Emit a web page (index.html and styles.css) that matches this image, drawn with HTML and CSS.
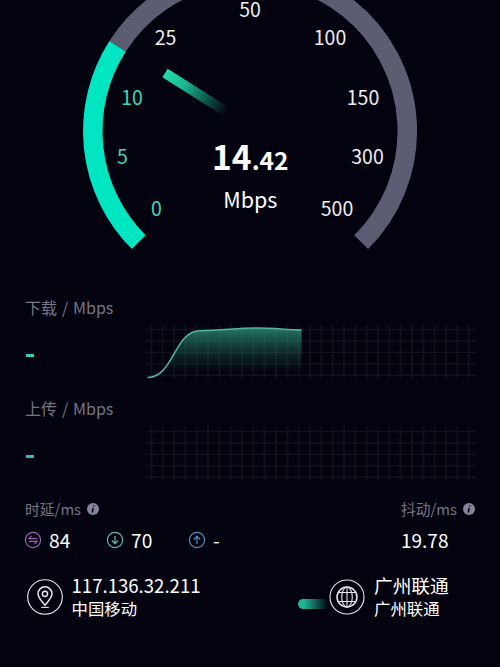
FILE: index.html
```html
<!DOCTYPE html>
<html lang="zh-CN">
<head>
    <meta charset="UTF-8">
    <meta name="viewport" content="width=device-width, initial-scale=1.0">
    <title>Speed Test</title>
    <link rel="stylesheet" href="styles.css">
</head>
<body>
    <!-- Gauge -->
    <svg class="gauge" viewBox="0 0 500 290">
        <defs>
            <linearGradient id="needle" x1="0" x2="1" y1="0" y2="0">
                <stop offset="0" stop-color="#1fdcae"/>
                <stop offset="0.3" stop-color="#1bb893"/>
                <stop offset="1" stop-color="#1bb893" stop-opacity="0"/>
            </linearGradient>
        </defs>
        <path class="track" d="M117.6 46.2A157.25 157.25 0 1 1 361.2 242.2"/>
        <path class="progress" d="M138.8 242.2A157.25 157.25 0 0 1 117.6 46.2"/>
        <rect x="0" y="-5" width="73" height="10" fill="url(#needle)" transform="translate(165 73) rotate(32.2)"/>
        <g class="ticks">
            <text class="on" x="156.5" y="216.4">0</text>
            <text class="on" x="122.5" y="164.4">5</text>
            <text class="on" x="132" y="105.4">10</text>
            <text x="165.5" y="45">25</text>
            <text x="250" y="17">50</text>
            <text x="330" y="45">100</text>
            <text x="363" y="105.4">150</text>
            <text x="367.5" y="164.4">300</text>
            <text x="337" y="216.4">500</text>
        </g>
        <text class="speed" x="250.3" y="170.4">14<tspan class="decimal">.42</tspan></text>
        <text class="unit" x="250.3" y="208.4">Mbps</text>
    </svg>

    <!-- Download and upload -->
    <div class="rate">
        <div class="rate-info">
            <div class="label">下载 / Mbps</div>
            <div class="dash download"></div>
        </div>
        <svg class="chart" viewBox="0 0 330 58">
            <defs>
                <pattern id="grid" x="-0.3" y="-4.1" width="11.33" height="11.4" patternUnits="userSpaceOnUse">
                    <path d="M5.66 0V11.4M0 10.8H11.33" stroke="#15161f" stroke-width="1.2" fill="none"/>
                </pattern>
                <linearGradient id="area" x1="0" x2="0" y1="0" y2="1">
                    <stop offset="0" stop-color="#2b8a70" stop-opacity="0.85"/>
                    <stop offset="0.75" stop-color="#17624f" stop-opacity="0.12"/>
                    <stop offset="0.9" stop-color="#17624f" stop-opacity="0"/>
                </linearGradient>
            </defs>
            <rect y="2" width="330" height="53" fill="url(#grid)"/>
            <path fill="url(#area)" d="M1.5 54.5C28 54.5 28 7.7 54 7.7C76 7.7 90 5 111 5C130 5 140 7 155.7 7V54.5Z"/>
            <path class="curve" d="M1.5 54.5C28 54.5 28 7.7 54 7.7C76 7.7 90 5 111 5C130 5 140 7 155.7 7"/>
        </svg>
    </div>
    <div class="rate">
        <div class="rate-info">
            <div class="label">上传 / Mbps</div>
            <div class="dash upload"></div>
        </div>
        <svg class="chart" viewBox="0 0 330 58">
            <rect y="2" width="330" height="53" fill="url(#grid)"/>
        </svg>
    </div>

    <!-- Latency and jitter -->
    <div class="stats">
        <div>
            <div class="label stat-label">时延/ms
                <svg class="info" viewBox="0 0 12 12"><circle cx="6" cy="6" r="6"/><path d="M6.8 2.4L6.6 3.5M6.2 5L5.3 9.5"/></svg>
            </div>
            <div class="pings">
                <div class="ping">
                    <svg class="ping-icon idle" viewBox="0 0 18 18"><circle cx="9" cy="9" r="7.6"/><path d="M13 7.6H5L7.5 5.3M5 10.4H13L10.5 12.7"/></svg>84
                </div>
                <div class="ping">
                    <svg class="ping-icon down" viewBox="0 0 18 18"><circle cx="9" cy="9" r="7.6"/><path d="M9 5V12.6M5.8 9.5L9 12.7L12.2 9.5"/></svg>70
                </div>
                <div class="ping">
                    <svg class="ping-icon up" viewBox="0 0 18 18"><circle cx="9" cy="9" r="7.6"/><path d="M9 13V5.4M5.8 8.5L9 5.3L12.2 8.5"/></svg>-
                </div>
            </div>
        </div>
        <div class="jitter">
            <div class="label stat-label">抖动/ms
                <svg class="info" viewBox="0 0 12 12"><circle cx="6" cy="6" r="6"/><path d="M6.8 2.4L6.6 3.5M6.2 5L5.3 9.5"/></svg>
            </div>
            <div class="jitter-value">19.78</div>
        </div>
    </div>

    <!-- Client and server -->
    <div class="network">
        <svg class="round-icon" viewBox="0 0 36 36">
            <circle cx="18" cy="18" r="17.3"/>
            <path class="bold" d="M18 26.2C14.8 22.6 11 18.6 11 14.8A7 7 0 0 1 25 14.8C25 18.6 21.2 22.6 18 26.2Z"/>
            <circle class="bold" cx="18" cy="14.8" r="2.6"/>
            <path d="M14.3 28.4H21.7"/>
        </svg>
        <div class="host client">
            <div class="host-name ip">117.136.32.211</div>
            <div class="host-isp">中国移动</div>
        </div>
        <div class="pill"></div>
        <svg class="round-icon" viewBox="0 0 36 36">
            <circle cx="18" cy="18" r="17"/>
            <circle class="bold" cx="18" cy="18" r="10"/>
            <ellipse cx="18" cy="18" rx="5.3" ry="10"/>
            <path d="M18 8V28M9.3 13.5H26.7M9.3 22.5H26.7"/>
        </svg>
        <div class="host">
            <div class="host-name">广州联通</div>
            <div class="host-isp">广州联通</div>
        </div>
    </div>
</body>
</html>
```
FILE: styles.css
```css
:root {
    --background: #03020f;
    --accent: #00e6c3;
    --muted: #777684;
}

body {
    margin: 0;
    height: 667px;
    overflow: hidden;
    background: var(--background);
    color: #fff;
    font-family: "Noto Sans CJK SC", sans-serif;
}

svg {
    display: block;
    flex: none;
}

.gauge {
    width: 500px;
    height: 290px;
}

.track,
.progress {
    fill: none;
    stroke: #5c5d72;
    stroke-width: 19.5;
}

.progress {
    stroke: var(--accent);
}

.gauge text {
    fill: #fff;
    text-anchor: middle;
}

.ticks {
    font-size: 19.5px;
}

.ticks text {
    fill: #eeeef2;
}

.ticks .on {
    fill: #3bd9b2;
}

.gauge .speed {
    font-size: 33.5px;
    font-weight: bold;
}

.decimal {
    font-size: 24.5px;
}

.unit {
    font-size: 21.5px;
}

/* Download / upload rows */
.rate {
    display: flex;
    height: 101.5px;
    padding: 0 24px 0 25px;
}

.rate-info {
    width: 121px;
    padding-top: 5px;
}

.label {
    color: var(--muted);
    font-size: 16px;
    line-height: 24px;
    white-space: nowrap;
}

.rate .label {
    word-spacing: 1.3px;
}

.dash {
    width: 8px;
    height: 3px;
    margin: 35px 0 0 1px;
    background: #32d2b4;
}

.upload {
    background: #36b7c8;
}

.rate + .rate .label {
    margin-top: -0.5px;
}

.chart {
    width: 330px;
    height: 58px;
    margin-top: 33px;
}

.curve {
    fill: none;
    stroke: #58b49c;
    stroke-width: 1.5;
}

/* Latency and jitter */
.stats {
    display: flex;
    justify-content: space-between;
    padding: 4px 25px 0 25px;
}

.stat-label {
    display: flex;
    align-items: center;
    gap: 6px;
    font-size: 14.8px;
}

.info {
    width: 12px;
    height: 12px;
    fill: #85849a;
}

.info path {
    stroke: var(--background);
    stroke-width: 1.6;
}

.pings {
    display: flex;
    margin-top: 5px;
}

.ping {
    display: flex;
    align-items: center;
    gap: 7px;
    width: 82px;
    font-size: 19.2px;
    line-height: 28px;
}

.ping-icon {
    width: 18px;
    height: 18px;
    margin-left: -1px;
    fill: none;
    stroke-width: 1.2;
}

.idle {
    stroke: #9b62b5;
}

.down {
    stroke: #6bb8a4;
}

.up {
    stroke: #4e91bd;
}

.jitter-value {
    margin-top: 5px;
    font-size: 19px;
    line-height: 28px;
}

/* Client and server */
.network {
    display: flex;
    align-items: center;
    margin-top: 20px;
    padding-left: 27px;
}

.round-icon {
    width: 36px;
    height: 36px;
    fill: none;
    stroke: #e8e8ec;
    stroke-width: 1.1;
}

.round-icon .bold {
    stroke-width: 1.5;
}

.host {
    margin: -1px 0 0 9px;
    white-space: nowrap;
}

.client {
    margin-left: 8.5px;
    width: 226.5px;
}

.host-name {
    font-size: 18.7px;
    line-height: 24px;
}

.ip {
    font-size: 18.6px;
}

.host-isp {
    font-size: 16.4px;
    line-height: 22px;
}

.pill {
    width: 30px;
    height: 10px;
    margin: 15px 1px 0 0;
    border-radius: 5px 0 0 5px;
    background: linear-gradient(to right, #1fb695 20%, rgba(31, 182, 149, 0));
}
```
